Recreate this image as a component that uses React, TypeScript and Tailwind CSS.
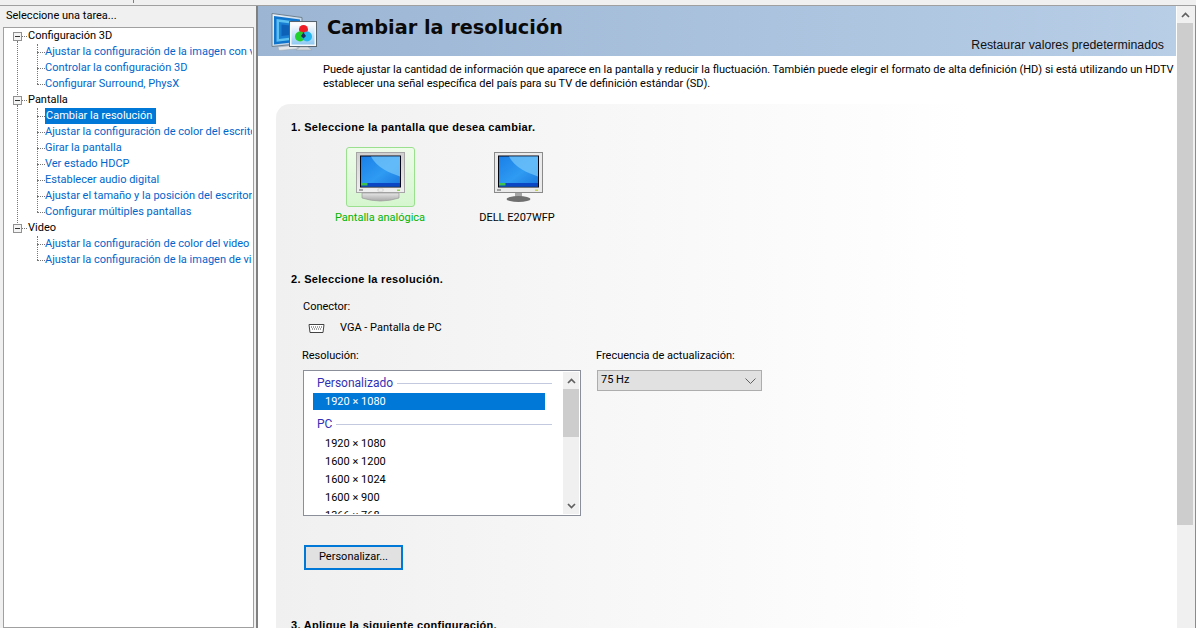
import { FC } from 'react';

const UI_FONT = "font-['Roboto',sans-serif]";

const TREE = [
  {
    label: 'Configuración 3D',
    items: ['Ajustar la configuración de la imagen con vista previa', 'Controlar la configuración 3D', 'Configurar Surround, PhysX'],
  },
  {
    label: 'Pantalla',
    items: [
      'Cambiar la resolución',
      'Ajustar la configuración de color del escritorio',
      'Girar la pantalla',
      'Ver estado HDCP',
      'Establecer audio digital',
      'Ajustar el tamaño y la posición del escritorio',
      'Configurar múltiples pantallas',
    ],
  },
  {
    label: 'Video',
    items: ['Ajustar la configuración de color del video', 'Ajustar la configuración de la imagen de video'],
  },
];

const RESOLUTIONS = ['1920 × 1080', '1600 × 1200', '1600 × 1024', '1600 × 900', '1366 × 768'];

const Expander: FC = () => (
  <span className="flex h-[9px] w-[9px] shrink-0 items-center justify-center border border-[#919191] bg-[#f4f4f4]">
    <span className="h-px w-[5px] bg-[#333]" />
  </span>
);

const TaskTree: FC = () => (
  <div className="min-h-0 flex-1 border border-[#a0a0a0] bg-white pr-px">
    <div className="h-full overflow-hidden pl-[9px] text-[11px] leading-4">
      {TREE.map((group, g) => (
        <div key={group.label} className="relative">
          {g < TREE.length - 1 && (
            <span className="absolute bottom-[-5px] left-[4px] top-[13px] border-l border-dotted border-[#777]" />
          )}
          <div className="flex h-4 items-center">
            <Expander />
            <span className="h-0 w-[5px] border-t border-dotted border-[#777]" />
            <span className="ml-px whitespace-nowrap text-black">{group.label}</span>
          </div>
          <div className="relative ml-6">
            <span className="absolute bottom-2 left-0 top-0 border-l border-dotted border-[#777]" />
            {group.items.map((item, i) => (
              <div key={item} className="flex h-4 items-center">
                <span className="h-0 w-2 shrink-0 border-t border-dotted border-[#777]" />
                <span
                  className={
                    g === 1 && i === 0
                      ? 'whitespace-nowrap bg-[#0078d7] pl-px pr-[4px] text-white'
                      : 'whitespace-nowrap text-[#0066cc]'
                  }
                >
                  {item}
                </span>
              </div>
            ))}
          </div>
        </div>
      ))}
    </div>
  </div>
);

const BannerIcon: FC = () => (
  <svg width="48" height="38" viewBox="0 0 48 38" className="shrink-0">
    <defs>
      <linearGradient id="bnFrame" x1="0" y1="0" x2="1" y2="1">
        <stop offset="0" stopColor="#eef5fb" />
        <stop offset="1" stopColor="#a9c4dd" />
      </linearGradient>
      <linearGradient id="bnSmall" x1="0" y1="0" x2="0" y2="1">
        <stop offset="0" stopColor="#ffffff" />
        <stop offset="1" stopColor="#8fc8f2" />
      </linearGradient>
    </defs>
    <path d="M2 .5l30 4v26l-30 3z" fill="url(#bnFrame)" stroke="#71828f" />
    <path d="M4 3l26 3.500v22l-26 3z" fill="#0f74cc" />
    <path d="M6.500 6l21 2.800v17.500l-21 2.500z" fill="#5cc0f0" />
    <path d="M9 9l16 2v13l-16 2z" fill="#1a7fd2" />
    <path d="M11.500 11.500l11 1.300v9l-11 1.200z" fill="#0d62b8" />
    <path d="M8 34l15-1.500 7 3-21 2z" fill="#e4e7ea" stroke="#9fa9b1" strokeWidth="0.5" />
    <rect x="19.500" y="8.500" width="27" height="25" fill="#f6f8fa" stroke="#55646f" />
    <rect x="21.500" y="10.500" width="23" height="21" fill="url(#bnSmall)" />
    <circle cx="33.500" cy="16.500" r="4.500" fill="#ee1c25" />
    <circle cx="30" cy="23.500" r="5" fill="#22d02c" />
    <circle cx="37" cy="23.500" r="5" fill="#27b5ee" />
    <path d="M33.500 19.500l2.500 3.500-2.500 2.500-2.500-2.500z" fill="#1f2a60" />
    <path d="M30 34h8l4 3H26z" fill="#d6dade" stroke="#98a2aa" strokeWidth="0.5" />
  </svg>
);

// Pantalla común de los dos monitores (fondo azul con barra de tareas)
const Screen: FC<{ id: string }> = ({ id }) => (
  <>
    <defs>
      <linearGradient id={id} x1="0" y1="0" x2="1" y2="1">
        <stop offset="0" stopColor="#1a7fe8" />
        <stop offset="0.55" stopColor="#2f9bf2" />
        <stop offset="1" stopColor="#1a78df" />
      </linearGradient>
    </defs>
    <rect x="4" y="3.500" width="41" height="32" fill="#050510" />
    <rect x="5" y="4.500" width="39" height="30" fill={`url(#${id})`} />
    <path d="M15 4.500h29v20C34 21 21 16 15 4.500z" fill="#74c6fa" opacity="0.75" />
    <rect x="5" y="31" width="39" height="3.500" fill="#0b46c4" />
    <rect x="5" y="31" width="6.500" height="2.500" fill="#3fc24c" />
  </>
);

const CrtIcon: FC = () => (
  <svg width="49" height="50" viewBox="0 0 49 50">
    <defs>
      <linearGradient id="crtBody" x1="0" y1="0" x2="0" y2="1">
        <stop offset="0" stopColor="#cfcfcf" />
        <stop offset="1" stopColor="#f0f0f0" />
      </linearGradient>
      <linearGradient id="crtBase" x1="0" y1="0" x2="0" y2="1">
        <stop offset="0" stopColor="#e6e6e6" />
        <stop offset="1" stopColor="#a8a8a8" />
      </linearGradient>
    </defs>
    <rect x="0.500" y="0.500" width="48" height="40" fill="url(#crtBody)" stroke="#a6a6a6" />
    <Screen id="crtScreen" />
    <rect x="3" y="37" width="4" height="2" fill="#a8a8a8" />
    <rect x="22" y="37" width="5" height="2" fill="#fff" stroke="#b5b5b5" strokeWidth="0.5" />
    <rect x="41" y="37.500" width="3" height="1.500" fill="#8fd84a" />
    <path d="M6 41h37v5q-18.500 6-37 0z" fill="url(#crtBase)" stroke="#989898" strokeWidth="0.7" />
  </svg>
);

const FlatIcon: FC = () => (
  <svg width="50" height="50" viewBox="0 0 50 50">
    <rect x="0.500" y="0.500" width="48" height="40" fill="#eaeaea" stroke="#8a8a8a" />
    <Screen id="flatScreen" />
    <rect x="3" y="37" width="4" height="2" fill="#a0a0a0" />
    <rect x="41" y="37.500" width="3" height="1.500" fill="#c8d84a" />
    <rect x="21" y="41" width="7" height="4" fill="#a6a6a6" />
    <ellipse cx="24.500" cy="47" rx="12" ry="3" fill="#6f6f6f" />
  </svg>
);

const ScrollArrow: FC<{ down?: boolean }> = ({ down }) => (
  <svg width="9" height="6" viewBox="0 0 9 6">
    <path d={down ? 'M1 1l3.5 3.5L8 1' : 'M1 5l3.5-3.5L8 5'} fill="none" stroke="#606060" strokeWidth="1.7" />
  </svg>
);

const GroupHeader: FC<{ label: string }> = ({ label }) => (
  <div className="flex h-[18px] items-center gap-1 pl-1 pr-[11px] text-[12px]">
    <span className="text-[#3232b4]">{label}</span>
    <span className="h-px flex-1 bg-[#c3cadf]" />
  </div>
);

const ResolutionList: FC = () => (
  <div className="flex h-[146px] w-[278px] overflow-hidden border border-[#8a8f9a] bg-white p-px">
    <div className="min-w-0 flex-1 overflow-hidden pl-[8px] pt-[2px] text-[11px] leading-[18px]">
      <GroupHeader label="Personalizado" />
      <div className="mb-[5px] mt-[1px] h-[17px] w-[232px] bg-[#0078d7] pl-3 leading-[18px] text-white">1920 × 1080</div>
      <GroupHeader label="PC" />
      <div className="mt-[2px]">
        {RESOLUTIONS.map((res) => (
          <div key={res} className="h-[18px] pl-3 text-black">
            {res}
          </div>
        ))}
      </div>
    </div>
    <div className="flex w-[16px] shrink-0 flex-col items-center bg-[#f0f0f0]">
      <div className="flex h-[17px] shrink-0 items-center justify-center"><ScrollArrow /></div>
      <div className="h-[48px] w-full bg-[#cdcdcd]" />
      <div className="flex-1" />
      <div className="flex h-[17px] shrink-0 items-center justify-center"><ScrollArrow down /></div>
    </div>
  </div>
);

const SectionTitle: FC<{ children: string }> = ({ children }) => (
  <h2 className="font-['Liberation_Sans',sans-serif] text-[11px] font-bold leading-4 tracking-[0.3px] text-black">{children}</h2>
);

export default function App() {
  return (
    <div className={`${UI_FONT} h-[628px] w-[1196px] overflow-hidden bg-[#f0f0f0] text-[11px] text-black`}>
      <div className="relative h-[6px] border-b border-[#a0a0a0]">
        <span className="absolute left-[133px] top-0 h-[3px] w-px bg-[#808080]" />
      </div>
      <div className="flex h-[622px]">
        {/* Panel de tareas */}
        <aside className="flex w-[254px] shrink-0 flex-col pl-[3px]">
          <div className="flex h-[21px] items-center pl-[3px] text-[11px]">Seleccione una tarea...</div>
          <TaskTree />
        </aside>

        {/* Contenido */}
        <main className="ml-[2px] flex min-w-0 flex-1 border-l-2 border-[#808080] bg-white">
          <div className="min-w-0 flex-1 overflow-hidden">
            <header className="flex h-[50px] bg-gradient-to-r from-[#9bb5d3] to-[#b8cee7] pl-[12px] pr-[12px]">
              <div className="pt-[7px]">
                <BannerIcon />
              </div>
              <h1 className="ml-[9px] pt-[10px] font-['DejaVu_Sans',sans-serif] text-[19.3px] font-bold leading-6 text-[#0a0a0a]">
                Cambiar la resolución
              </h1>
              <span className="ml-auto self-end pb-[3px] font-['Liberation_Sans',sans-serif] text-[12.3px] leading-4 text-[#111]">
                Restaurar valores predeterminados
              </span>
            </header>

            <p className="ml-[65px] mt-[7px] whitespace-nowrap leading-[14px]">
              Puede ajustar la cantidad de información que aparece en la pantalla y reducir la fluctuación. También puede elegir el formato de alta definición (HD) si está utilizando un HDTV y
              <br />
              establecer una señal específica del país para su TV de definición estándar (SD).
            </p>

            <section className="ml-[18px] mt-[13px] h-[600px] rounded-tl-[14px] bg-gradient-to-r from-[#f0f0f0] to-white to-[77%] pl-[15px] pt-[15px]">
              <SectionTitle>1. Seleccione la pantalla que desea cambiar.</SectionTitle>

              <div className="ml-[45px] mt-[12px] flex h-[105px] items-start">
                <div className="flex w-[88px] flex-col items-center">
                  <div className="flex h-[60px] w-[69px] items-center justify-center rounded-[3px] border border-[#9be08f] bg-gradient-to-b from-[#eefbea] to-[#d5f6cf]">
                    <CrtIcon />
                  </div>
                  <span className="mt-[3px] whitespace-nowrap leading-4 text-[#00b400]">Pantalla analógica</span>
                </div>
                <div className="ml-[49px] flex w-[88px] flex-col items-center">
                  <div className="ml-[3px] flex h-[60px] items-center justify-center">
                    <FlatIcon />
                  </div>
                  <span className="mt-[3px] whitespace-nowrap leading-4">DELL E207WFP</span>
                </div>
              </div>

              <div className="mt-[19px]">
                <SectionTitle>2. Seleccione la resolución.</SectionTitle>
              </div>

              <div className="ml-[12px] mt-[12px] leading-4">Conector:</div>
              <div className="ml-[17px] mt-[5px] flex h-4 items-center">
                <svg width="17" height="9" viewBox="0 0 17 9">
                  <path d="M1 .5h15l-1 8H2z" fill="#fff" stroke="#444" />
                  <path d="M3 3h11M4 5h9" stroke="#444" strokeDasharray="1 1" />
                </svg>
                <span className="ml-[15px]">VGA - Pantalla de PC</span>
              </div>

              <div className="mt-[12px] flex">
                <div className="ml-[11px] w-[294px]">
                  <div className="leading-4">Resolución:</div>
                  <div className="ml-px mt-[6px]">
                    <ResolutionList />
                  </div>
                  <button className="ml-[2px] mt-[29px] h-[25px] w-[99px] border-2 border-[#0078d7] bg-[#e1e1e1] text-[11px] text-black">
                    Personalizar...
                  </button>
                </div>
                <div>
                  <div className="leading-4">Frecuencia de actualización:</div>
                  <div className="ml-px mt-[6px] flex h-[21px] w-[165px] items-center justify-between border border-[#adadad] bg-[#e1e1e1] pl-[3px] pr-[5px]">
                    <span>75 Hz</span>
                    <svg width="11" height="6" viewBox="0 0 11 6">
                      <path d="M.5.5l5 5 5-5" fill="none" stroke="#606060" />
                    </svg>
                  </div>
                </div>
              </div>

              <div className="mt-[47px]">
                <SectionTitle>3. Aplique la siguiente configuración.</SectionTitle>
              </div>
            </section>
          </div>

          {/* Barra de desplazamiento */}
          <div className="ml-px flex w-[16px] shrink-0 flex-col items-center bg-[#f0f0f0]">
            <div className="flex h-[17px] shrink-0 items-center justify-center"><ScrollArrow /></div>
            <div className="h-[502px] w-full bg-[#cdcdcd]" />
          </div>
          <div className="flex w-[3px] shrink-0 justify-end bg-[#f0f0f0]">
            <span className="w-px bg-[#3cc04a]" />
          </div>
        </main>
      </div>
    </div>
  );
}
